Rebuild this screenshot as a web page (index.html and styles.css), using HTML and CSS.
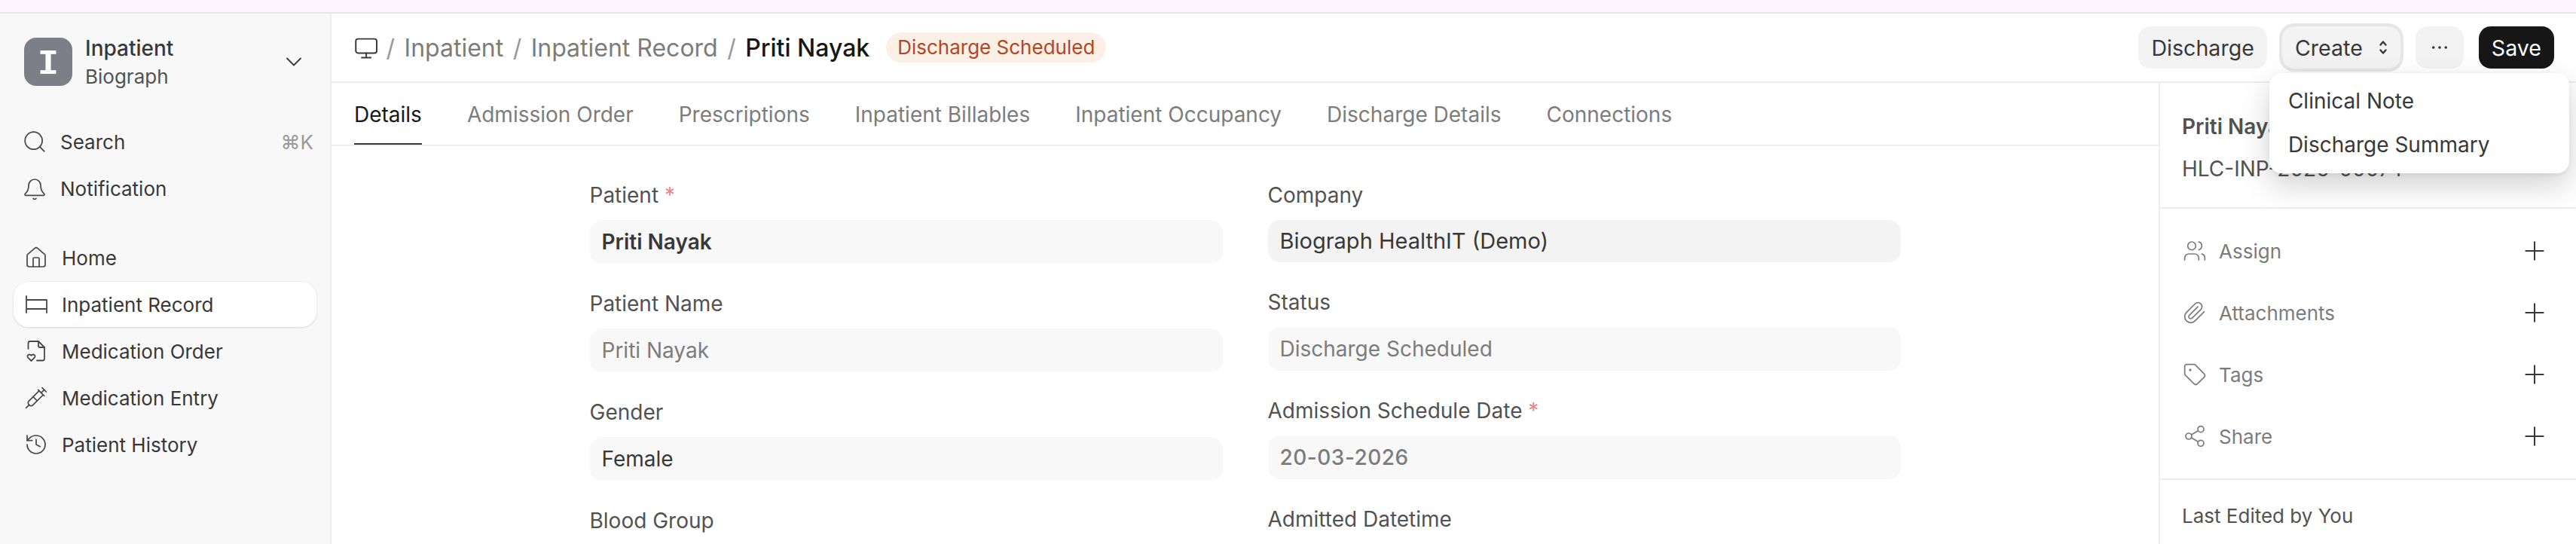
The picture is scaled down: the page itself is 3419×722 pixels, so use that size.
FILE: index.html
```html
<!DOCTYPE html>
<html lang="en">
<head>
<meta charset="utf-8">
<title>Priti Nayak</title>
<link rel="stylesheet" href="styles.css">
</head>
<body>
<div class="top-band"></div>
<div class="app">
  <aside class="sidebar">
    <div class="brand">
      <div class="brand-logo"><span class="brand-letter">I</span></div>
      <div class="brand-text">
        <div class="brand-name">Inpatient</div>
        <div class="brand-sub">Biograph</div>
      </div>
      <svg class="brand-chevron" viewBox="0 0 24 24"><path d="m6 9 6 6 6-6"/></svg>
    </div>
    <nav class="nav nav-util">
      <div class="nav-item">
        <svg class="ico" viewBox="0 0 24 24"><circle cx="11" cy="11" r="8.6"/><path d="m21.6 21.6-4.4-4.4"/></svg>
        <span>Search</span><span class="kbd">⌘K</span>
      </div>
      <div class="nav-item">
        <svg class="ico" viewBox="0 0 24 24"><path d="M10.6 22a1.6 1.6 0 0 0 2.8 0"/><path d="M2.6 17.3a1 1 0 0 0 .8 1.7h17.2a1 1 0 0 0 .8-1.7C20 16 18 14.500 18 9A6 6 0 0 0 6 9c0 5.500-2 7-3.400 8.300"/></svg>
        <span>Notification</span>
      </div>
    </nav>
    <nav class="nav nav-main">
      <div class="nav-item">
        <svg class="ico" viewBox="0 0 24 24"><path d="M15 21v-8a1 1 0 0 0-1-1h-4a1 1 0 0 0-1 1v8"/><path d="M3 10a2 2 0 0 1 .709-1.528l7-5.999a2 2 0 0 1 2.582 0l7 5.999A2 2 0 0 1 21 10v9a2 2 0 0 1-2 2H5a2 2 0 0 1-2-2z"/></svg>
        <span>Home</span>
      </div>
      <div class="nav-item active">
        <svg class="ico" viewBox="0 0 32 32"><path d="M3 5v22M30 10v17M3 10h27M3 22h27"/></svg>
        <span>Inpatient Record</span>
      </div>
      <div class="nav-item">
        <svg class="ico" viewBox="0 0 32 32"><path d="M5.500 13V5.500q0-2.500 2.500-2.500h11l8 8v15q0 2.500-2.500 2.500H17"/><path d="M19 3v6q0 2 2 2h6"/><path d="m9.500 29-4.300-4.300q-1.700-2.200.4-3.700 2.100-1.200 3.900.8 1.800-2 3.900-.8 2.100 1.500.4 3.700z"/></svg>
        <span>Medication Order</span>
      </div>
      <div class="nav-item">
        <svg class="ico" viewBox="0 0 24 24"><path d="m18 2 4 4"/><path d="m17 7 3-3"/><path d="M19 9 8.700 19.300c-1 1-2.500 1-3.400 0l-.6-.6c-1-1-1-2.500 0-3.400L15 5"/><path d="m9 11 4 4"/><path d="m5 19-3 3"/><path d="m14 4 6 6"/></svg>
        <span>Medication Entry</span>
      </div>
      <div class="nav-item">
        <svg class="ico" viewBox="0 0 24 24"><path d="M3 12a9 9 0 1 0 9-9 9.750 9.750 0 0 0-6.740 2.740L3 8"/><path d="M3 3v5h5"/><path d="M12 7v5l4 2"/></svg>
        <span>Patient History</span>
      </div>
    </nav>
  </aside>

  <main class="main">
    <header class="page-head">
      <div class="crumbs">
        <svg class="crumb-ico" viewBox="0 0 24 24"><rect x="1.500" y="4.400" width="18.500" height="12.600" rx="2"/><path d="M6.750 21h8M10.750 17v4"/></svg>
        <span class="sep">/</span>
        <span class="crumb">Inpatient</span>
        <span class="sep">/</span>
        <span class="crumb">Inpatient Record</span>
        <span class="sep">/</span>
        <span class="crumb current">Priti Nayak</span>
        <span class="badge">Discharge Scheduled</span>
      </div>
      <div class="actions">
        <button class="btn">Discharge</button>
        <div class="create-wrap">
          <button class="btn btn-open">Create
            <svg class="updown" viewBox="0 0 12 24"><path d="m2.500 8.500 3.500-4 3.500 4M2.500 15.500l3.500 4 3.500-4"/></svg>
          </button>
          <div class="menu">
            <div class="menu-item">Clinical Note</div>
            <div class="menu-item">Discharge Summary</div>
          </div>
        </div>
        <button class="btn btn-more" aria-label="More">
          <svg class="dots" viewBox="0 0 24 8"><circle cx="3" cy="4" r="2"/><circle cx="12" cy="4" r="2"/><circle cx="21" cy="4" r="2"/></svg>
        </button>
        <button class="btn btn-dark">Save</button>
      </div>
    </header>

    <div class="body">
      <section class="content">
        <div class="tabs">
          <div class="tab active">Details</div>
          <div class="tab">Admission Order</div>
          <div class="tab">Prescriptions</div>
          <div class="tab">Inpatient Billables</div>
          <div class="tab">Inpatient Occupancy</div>
          <div class="tab">Discharge Details</div>
          <div class="tab">Connections</div>
        </div>
        <div class="form">
          <div class="col">
            <div class="field">
              <label class="label">Patient <span class="req">*</span></label>
              <div class="input strong">Priti Nayak</div>
            </div>
            <div class="field">
              <label class="label">Patient Name</label>
              <div class="input muted">Priti Nayak</div>
            </div>
            <div class="field">
              <label class="label">Gender</label>
              <div class="input">Female</div>
            </div>
            <div class="field">
              <label class="label">Blood Group</label>
            </div>
          </div>
          <div class="col">
            <div class="field">
              <label class="label">Company</label>
              <div class="input input-focus">Biograph HealthIT (Demo)</div>
            </div>
            <div class="field">
              <label class="label">Status</label>
              <div class="input muted">Discharge Scheduled</div>
            </div>
            <div class="field">
              <label class="label">Admission Schedule Date <span class="req">*</span></label>
              <div class="input muted input-date">20-03-2026</div>
            </div>
            <div class="field">
              <label class="label">Admitted Datetime</label>
            </div>
          </div>
        </div>
      </section>

      <aside class="rail">
        <div class="rail-head">
          <div class="rail-title">Priti Nayak</div>
          <div class="rail-id">HLC-INP-2026-00074</div>
        </div>
        <div class="rail-list">
          <div class="rail-item">
            <svg class="rail-ico" viewBox="0 0 24 24"><path d="M16 21v-2a4 4 0 0 0-4-4H6a4 4 0 0 0-4 4v2"/><circle cx="9" cy="7" r="4"/><path d="M22 21v-2a4 4 0 0 0-3-3.870"/><path d="M16 3.130a4 4 0 0 1 0 7.750"/></svg>
            <span>Assign</span>
            <svg class="plus" viewBox="0 0 24 24"><path d="M5 12h14M12 5v14"/></svg>
          </div>
          <div class="rail-item">
            <svg class="rail-ico" viewBox="0 0 24 24"><path d="m21.440 11.050-9.190 9.190a6 6 0 0 1-8.490-8.490l8.570-8.570A4 4 0 1 1 18 8.840l-8.590 8.570a2 2 0 0 1-2.830-2.830l8.490-8.480"/></svg>
            <span>Attachments</span>
            <svg class="plus" viewBox="0 0 24 24"><path d="M5 12h14M12 5v14"/></svg>
          </div>
          <div class="rail-item">
            <svg class="rail-ico" viewBox="0 0 24 24"><path d="M12.586 2.586A2 2 0 0 0 11.172 2H4a2 2 0 0 0-2 2v7.172a2 2 0 0 0 .586 1.414l8.704 8.704a2.426 2.426 0 0 0 3.420 0l6.580-6.580a2.426 2.426 0 0 0 0-3.420z"/><circle class="fill" cx="7.500" cy="7.500" r=".6"/></svg>
            <span>Tags</span>
            <svg class="plus" viewBox="0 0 24 24"><path d="M5 12h14M12 5v14"/></svg>
          </div>
          <div class="rail-item">
            <svg class="rail-ico" viewBox="0 0 24 24"><circle cx="18" cy="5" r="3"/><circle cx="6" cy="12" r="3"/><circle cx="18" cy="19" r="3"/><path d="m8.590 13.510 6.830 3.980M15.410 6.510l-6.820 3.980"/></svg>
            <span>Share</span>
            <svg class="plus" viewBox="0 0 24 24"><path d="M5 12h14M12 5v14"/></svg>
          </div>
        </div>
        <div class="rail-foot">Last Edited by You</div>
      </aside>
    </div>
  </main>
</div>
</body>
</html>
```
FILE: styles.css
```css
* { box-sizing: border-box; }
html, body { margin: 0; height: 100%; }
body {
  width: 3419px;
  height: 722px;
  overflow: hidden;
  background: #fff;
  color: #383838;
  font-family: Inter, "DejaVu Sans", sans-serif;
  font-size: 28px;
  display: flex;
  flex-direction: column;
}
svg { fill: none; stroke: currentColor; stroke-linecap: round; stroke-linejoin: round; flex: none; }
.top-band { flex: none; height: 18px; background: #fdf6fe; border-bottom: 2px solid #e9e3ea; }
.app { flex: 1; display: flex; min-height: 0; }

/* sidebar */
.sidebar { flex: none; width: 440px; background: #f8f8f8; border-right: 2px solid #ededed; padding: 32px 18px 0; }
.brand { display: flex; align-items: center; height: 64px; padding-left: 14px; }
.brand-logo { width: 64px; height: 64px; border-radius: 16px; background: #7c7f87; color: #fff; font-family: Inter, sans-serif; font-feature-settings: "cv08" 1, "ss02" 1; font-weight: 600; font-size: 43px; line-height: 64px; text-align: center; flex: none; }
.brand-letter { display: inline-block; transform: scaleX(1.25); }
.brand-text { margin-left: 17px; flex: 1; }
.brand-name { font-size: 28px; line-height: 40px; color: #383838; font-weight: 500; }
.brand-sub { font-size: 26px; line-height: 36px; color: #525252; }
.brand-chevron { width: 36px; height: 36px; margin-right: 12px; stroke-width: 1.2; color: #383838; }
.nav { display: flex; flex-direction: column; gap: 2px; }
.nav-util { margin-top: 44px; }
.nav-main { margin-top: 32px; }
.nav-item { display: flex; align-items: center; height: 60px; padding: 0 4px 0 14px; gap: 18px; font-size: 26px; color: #383838; border-radius: 20px; }
.nav-util .nav-item { padding-left: 12px; }
.nav-item.active { background: #fff; box-shadow: 0 1px 3px rgba(0,0,0,.12), 0 0 2px rgba(0,0,0,.04); }
.ico { width: 32px; height: 32px; stroke-width: 1.3; color: #484848; }
.nav-item svg[viewBox="0 0 32 32"] { stroke-width: 1.8; }
.kbd { margin-left: auto; color: #999; }

/* main */
.main { flex: 1; min-width: 0; display: flex; flex-direction: column; }
.page-head { flex: none; height: 92px; border-bottom: 2px solid #ededed; display: flex; align-items: center; justify-content: space-between; padding: 0 29px 0 30px; }
.crumbs { display: flex; align-items: center; font-size: 32px; color: #7c7c7c; }
.crumb-ico { width: 36px; height: 36px; margin-right: -6px; stroke-width: 1.3; color: #383838; }
.sep { margin: 0 12.5px; color: #999; }
.crumb.current { color: #171717; font-weight: 500; }
.badge { margin-left: 22px; height: 40px; line-height: 40px; padding: 0 15px; border-radius: 20px; background: #fcf0e6; color: #b5451f; font-size: 26px; }
.actions { display: flex; align-items: center; gap: 20px; }
.btn { font: inherit; font-size: 28.6px; height: 56px; padding: 0 17px; border: 0; border-radius: 16px; background: #f3f3f3; color: #383838; display: flex; align-items: center; }
.btn-open { box-shadow: 0 0 0 4px #e6e6e6, 0 2px 4px rgba(0,0,0,.1); gap: 21px; }
.updown { width: 12px; height: 24px; stroke-width: 2.400; }
.btn-more { width: 64px; justify-content: center; padding: 0; }
.dots { width: 22px; height: 8px; fill: #383838; stroke: none; }
.btn-dark { background: #171717; color: #fff; }
.create-wrap { position: relative; }
.menu { position: absolute; top: 62px; left: -17px; width: 398px; height: 133px; background: #fff; border-radius: 16px; padding: 8px; box-shadow: 0 16px 40px rgba(0,0,0,.18), 0 2px 6px rgba(0,0,0,.06); z-index: 5; }
.menu-item { height: 58px; line-height: 58px; padding-left: 17px; font-size: 28px; color: #383838; }

.body { flex: 1; display: flex; min-height: 0; }
.content { flex: 1; min-width: 0; }
.tabs { height: 84px; border-bottom: 2px solid #ededed; display: flex; gap: 60px; padding-left: 30px; }
.tab { height: 82px; line-height: 84px; font-size: 28px; color: #7c7c7c; }
.tab.active { color: #171717; border-bottom: 2px solid #383838; }
.form { width: 1740px; margin: 0 auto; padding-top: 48px; display: grid; grid-template-columns: 840px 840px; gap: 60px; }
.field { margin-bottom: 36px; }
.label { display: block; height: 34px; line-height: 34px; margin-bottom: 16px; font-size: 28px; color: #525252; }
.req { color: #e5898d; }
.input { height: 58px; line-height: 58px; padding-left: 16px; background: #f8f8f8; border-radius: 16px; font-size: 28px; color: #383838; }
.input.strong { font-weight: 600; }
.input.muted { color: #7c7c7c; }
.input-focus { height: 56px; line-height: 56px; background: #f3f3f3; font-size: 29px; }
.input-date { letter-spacing: .5px; font-weight: 500; }

.rail { flex: none; width: 554px; border-left: 2px solid #ededed; color: #7c7c7c; font-size: 26px; }
.rail-head { height: 167px; border-bottom: 2px solid #ededed; padding: 38px 0 0 29px; color: #525252; font-size: 28px; }
.rail-title { font-weight: 600; line-height: 40px; }
.rail-id { line-height: 40px; margin-top: 16px; }
.rail-list { padding: 36px 35px 36px 30px; border-bottom: 2px solid #ededed; display: flex; flex-direction: column; gap: 42px; }
.rail-item { height: 40px; display: flex; align-items: center; gap: 16px; }
.rail-ico { width: 32px; height: 32px; stroke-width: 1.3; color: #7c7c7c; }
.fill { fill: currentColor; }
.plus { width: 40px; height: 40px; margin-left: auto; stroke-width: 1.2; color: #383838; }
.rail-foot { padding: 28px 0 0 29px; line-height: 40px; color: #525252; font-size: 26px; }
```
